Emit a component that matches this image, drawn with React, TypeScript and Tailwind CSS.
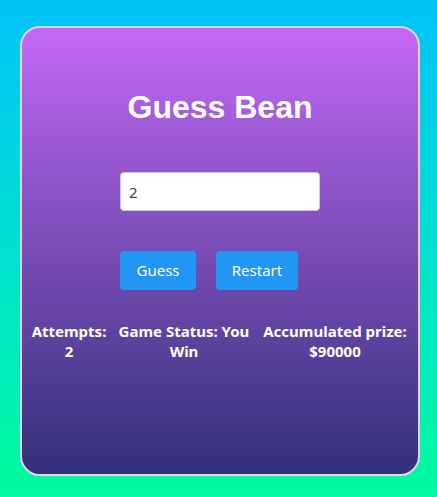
export default function App() {
  return (
    <div className="w-full h-[497px] flex items-start pl-[20px] pt-[26px] bg-gradient-to-b from-[#00c2f8] to-[#00fb9c]">
      <div className="w-[400px] h-[450px] rounded-[20px] border-2 border-[#e3d3f2] bg-gradient-to-b from-[#c468f6] to-[#33307a] flex flex-col items-center">
        <h1
          className="mt-[61px] text-[32px] font-bold text-white leading-[37px]"
          style={{ fontFamily: '"Liberation Sans", Arial, sans-serif' }}
        >
          Guess Bean
        </h1>
        <div className="mt-[46px] w-[200px] flex flex-col" style={{ fontFamily: '"Noto Sans", sans-serif' }}>
          <input
            type="text"
            defaultValue="2"
            className="w-[200px] h-[39px] rounded-[4px] border border-[#cccccc] bg-white px-[8px] text-[15px] text-[#444]"
          />
          <div className="mt-[40px] flex gap-[20px]">
            <button className="w-[76px] h-[39px] rounded-[4px] bg-[#2196f3] text-white text-[15px]">Guess</button>
            <button className="w-[82px] h-[39px] rounded-[4px] bg-[#2196f3] text-white text-[15px]">Restart</button>
          </div>
        </div>
        <div
          className="mt-[31px] w-full flex px-[8px] text-white font-bold text-[15px] leading-[20px] text-center"
          style={{ fontFamily: '"Noto Sans", sans-serif' }}
        >
          <div className="w-[78px]">Attempts: 2</div>
          <div className="w-[152px]">Game Status: You Win</div>
          <div className="w-[150px]">Accumulated prize: $90000</div>
        </div>
      </div>
    </div>
  );
}
